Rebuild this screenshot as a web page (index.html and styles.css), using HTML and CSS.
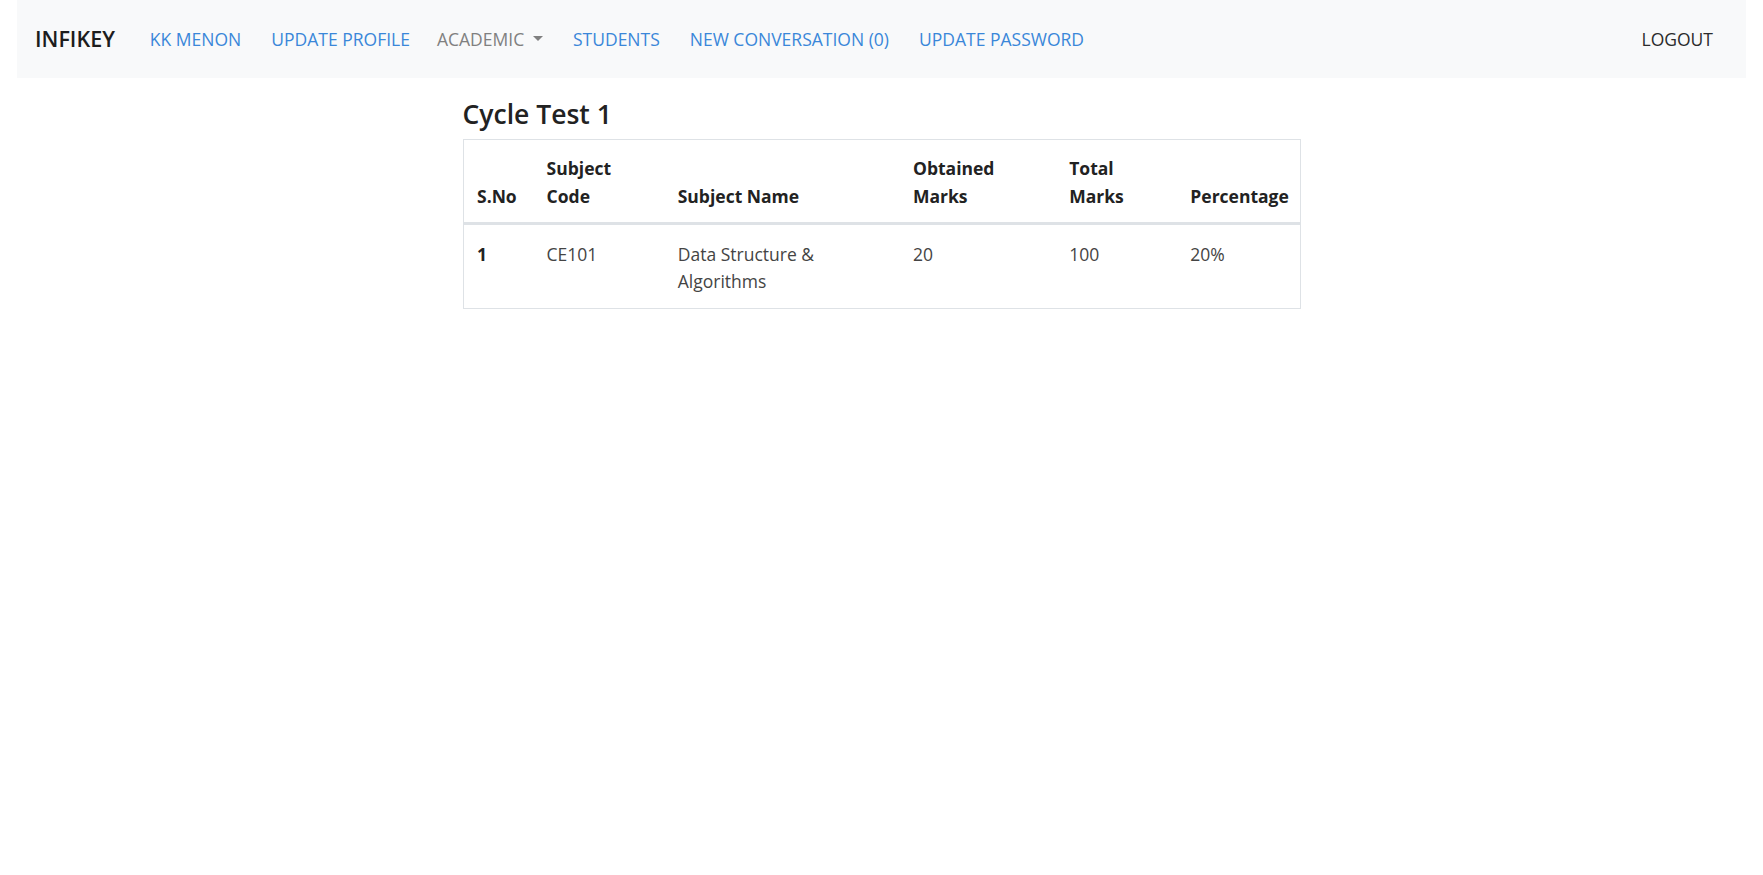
FILE: index.html
```html
<!DOCTYPE html>
<html lang="en">
<head>
<meta charset="utf-8">
<title>Cycle Test 1</title>
<link rel="stylesheet" href="styles.css">
</head>
<body>
<nav class="navbar">
  <a class="brand" href="#">INFIKEY</a>
  <ul class="nav-list">
    <li><a class="nav-link" href="#">KK MENON</a></li>
    <li><a class="nav-link" href="#">UPDATE PROFILE</a></li>
    <li><a class="nav-link muted dropdown-toggle" href="#">ACADEMIC</a></li>
    <li><a class="nav-link" href="#">STUDENTS</a></li>
    <li><a class="nav-link" href="#">NEW CONVERSATION (0)</a></li>
    <li><a class="nav-link" href="#">UPDATE PASSWORD</a></li>
  </ul>
  <ul class="nav-list nav-right">
    <li><a class="nav-link dark" href="#">LOGOUT</a></li>
  </ul>
</nav>
<main class="content">
  <h4 class="title">Cycle Test 1</h4>
  <table class="marks">
    <colgroup>
      <col class="c1"><col class="c2"><col class="c3"><col class="c4"><col class="c5"><col class="c6">
    </colgroup>
    <thead>
      <tr>
        <th>S.No</th>
        <th>Subject Code</th>
        <th>Subject Name</th>
        <th>Obtained Marks</th>
        <th>Total Marks</th>
        <th>Percentage</th>
      </tr>
    </thead>
    <tbody>
      <tr>
        <th class="row-head">1</th>
        <td>CE101</td>
        <td>Data Structure &amp; Algorithms</td>
        <td>20</td>
        <td>100</td>
        <td>20%</td>
      </tr>
    </tbody>
  </table>
</main>
</body>
</html>
```
FILE: styles.css
```css
html, body {
  margin: 0;
  padding: 0;
  background: #fff;
}
body {
  font-family: "Open Sans", "Noto Sans", sans-serif;
  font-size: 17.5px;
  line-height: 1.5;
  color: #212529;
}
a { text-decoration: none; }

.navbar {
  display: flex;
  align-items: center;
  height: 78px;
  margin: 0 17px;
  padding: 0 18px;
  background: #f8f9fa;
  box-sizing: border-box;
}
.brand {
  font-size: 21.5px;
  font-weight: 600;
  color: #1d1d1d;
  margin-right: 20px;
  line-height: 1.5;
}
.nav-list {
  display: flex;
  list-style: none;
  margin: 0;
  padding: 0;
}
.nav-right { margin-left: auto; }
.nav-link {
  display: block;
  padding: 0 15px;
  color: #3a87d9;
}
.nav-link.muted { color: #808080; padding-left: 12px; }
.nav-link.dark { color: #2b2b2b; }
.dropdown-toggle::after {
  content: "";
  display: inline-block;
  margin-left: 0.5em;
  vertical-align: 0.255em;
  border-top: 0.3em solid;
  border-right: 0.3em solid transparent;
  border-left: 0.3em solid transparent;
}

.content {
  width: 838px;
  margin: 0 auto;
  padding-top: 21px;
}
.title {
  font-size: 26.5px;
  font-weight: 600;
  line-height: 1.2;
  margin: 0 0 8px;
  color: #222;
}
.marks {
  width: 838px;
  border-collapse: collapse;
  border: 1px solid #dee2e6;
  table-layout: fixed;
}
.c1 { width: 70px; }
.c2 { width: 131px; }
.c3 { width: 235px; }
.c4 { width: 156px; }
.c5 { width: 121px; }
.c6 { width: 123px; }
.marks th, .marks td {
  padding: 15.5px 13.5px 12px;
  line-height: 27.5px;
  text-align: left;
  vertical-align: top;
}
.marks thead th {
  vertical-align: bottom;
  font-weight: 700;
  border-bottom: 3px solid #dee2e6;
  color: #222;
}
.marks tbody td {
  color: #444;
}
.marks .row-head {
  font-weight: 700;
  color: #222;
}
```
